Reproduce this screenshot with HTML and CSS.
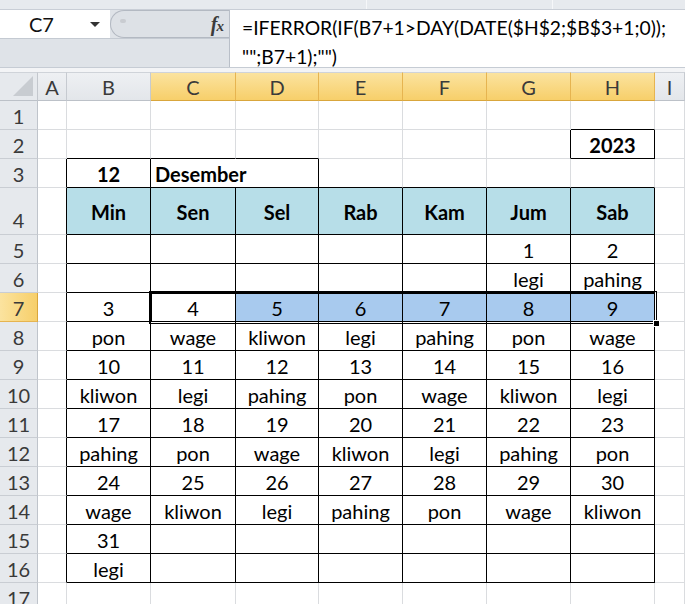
FILE: index.html
```html
<!DOCTYPE html>
<html>
<head>
<meta charset="utf-8">
<link rel="stylesheet" href="styles.css">
</head>
<body>
<div class="app">
  <div class="ribbon-edge">
    <div class="seg seg1"></div>
    <div class="seg seg2"></div>
    <div class="seg seg3"></div>
  </div>
  <div class="fbar">
    <div class="left">
      <div class="left-top">
        <div class="namebox">
          <span class="ref">C7</span>
          <span class="drop"></span>
        </div>
        <div class="pill">
          <span class="knob"></span>
          <span class="fx">f<span class="x">x</span></span>
        </div>
      </div>
    </div>
    <div class="formula">
      <div class="fline">=IFERROR(IF(B7+1&gt;DAY(DATE($H$2;$B$3+1;0));</div>
      <div class="fline">"";B7+1);"")</div>
    </div>
  </div>
  <div class="gap"></div>
  <div class="sheet">
    <!-- header row -->
    <div class="corner"><span class="tri"></span></div>
    <div class="ch">A</div>
    <div class="ch">B</div>
    <div class="ch on">C</div>
    <div class="ch on">D</div>
    <div class="ch on">E</div>
    <div class="ch on">F</div>
    <div class="ch on">G</div>
    <div class="ch on">H</div>
    <div class="ch">I</div>

    <!-- row 1 -->
    <div class="rh">1</div>
    <div class="c"></div><div class="c"></div><div class="c"></div><div class="c"></div><div class="c"></div><div class="c"></div><div class="c"></div>
    <div class="c bB"></div>
    <div class="c"></div>

    <!-- row 2 -->
    <div class="rh">2</div>
    <div class="c"></div>
    <div class="c bB"></div><div class="c bB"></div><div class="c bB"></div>
    <div class="c"></div><div class="c"></div>
    <div class="c bR"></div>
    <div class="c bR bB b">2023</div>
    <div class="c"></div>

    <!-- row 3 -->
    <div class="rh">3</div>
    <div class="c bR"></div>
    <div class="c bR bB b">12</div>
    <div class="c bR bB b l span2">Desember</div>
    <div class="c bB"></div><div class="c bB"></div><div class="c bB"></div><div class="c bB"></div>
    <div class="c"></div>

    <!-- row 4 -->
    <div class="rh tall">4</div>
    <div class="c bR"></div>
    <div class="c cal hd b">Min</div>
    <div class="c cal hd b">Sen</div>
    <div class="c cal hd b">Sel</div>
    <div class="c cal hd b">Rab</div>
    <div class="c cal hd b">Kam</div>
    <div class="c cal hd b">Jum</div>
    <div class="c cal hd b">Sab</div>
    <div class="c"></div>

    <!-- row 5 -->
    <div class="rh">5</div>
    <div class="c bR"></div>
    <div class="c cal"></div><div class="c cal"></div><div class="c cal"></div><div class="c cal"></div><div class="c cal"></div>
    <div class="c cal">1</div><div class="c cal">2</div>
    <div class="c"></div>

    <!-- row 6 -->
    <div class="rh">6</div>
    <div class="c bR"></div>
    <div class="c cal"></div><div class="c cal"></div><div class="c cal"></div><div class="c cal"></div><div class="c cal"></div>
    <div class="c cal">legi</div><div class="c cal">pahing</div>
    <div class="c"></div>

    <!-- row 7 -->
    <div class="rh on">7</div>
    <div class="c bR"></div>
    <div class="c cal">3</div>
    <div class="c cal">4</div>
    <div class="c cal sel">5</div>
    <div class="c cal sel">6</div>
    <div class="c cal sel">7</div>
    <div class="c cal sel">8</div>
    <div class="c cal sel">9</div>
    <div class="c"></div>

    <!-- row 8 -->
    <div class="rh">8</div>
    <div class="c bR"></div>
    <div class="c cal">pon</div><div class="c cal">wage</div><div class="c cal">kliwon</div><div class="c cal">legi</div><div class="c cal">pahing</div><div class="c cal">pon</div><div class="c cal">wage</div>
    <div class="c"></div>

    <!-- row 9 -->
    <div class="rh">9</div>
    <div class="c bR"></div>
    <div class="c cal">10</div><div class="c cal">11</div><div class="c cal">12</div><div class="c cal">13</div><div class="c cal">14</div><div class="c cal">15</div><div class="c cal">16</div>
    <div class="c"></div>

    <!-- row 10 -->
    <div class="rh">10</div>
    <div class="c bR"></div>
    <div class="c cal">kliwon</div><div class="c cal">legi</div><div class="c cal">pahing</div><div class="c cal">pon</div><div class="c cal">wage</div><div class="c cal">kliwon</div><div class="c cal">legi</div>
    <div class="c"></div>

    <!-- row 11 -->
    <div class="rh">11</div>
    <div class="c bR"></div>
    <div class="c cal">17</div><div class="c cal">18</div><div class="c cal">19</div><div class="c cal">20</div><div class="c cal">21</div><div class="c cal">22</div><div class="c cal">23</div>
    <div class="c"></div>

    <!-- row 12 -->
    <div class="rh">12</div>
    <div class="c bR"></div>
    <div class="c cal">pahing</div><div class="c cal">pon</div><div class="c cal">wage</div><div class="c cal">kliwon</div><div class="c cal">legi</div><div class="c cal">pahing</div><div class="c cal">pon</div>
    <div class="c"></div>

    <!-- row 13 -->
    <div class="rh">13</div>
    <div class="c bR"></div>
    <div class="c cal">24</div><div class="c cal">25</div><div class="c cal">26</div><div class="c cal">27</div><div class="c cal">28</div><div class="c cal">29</div><div class="c cal">30</div>
    <div class="c"></div>

    <!-- row 14 -->
    <div class="rh">14</div>
    <div class="c bR"></div>
    <div class="c cal">wage</div><div class="c cal">kliwon</div><div class="c cal">legi</div><div class="c cal">pahing</div><div class="c cal">pon</div><div class="c cal">wage</div><div class="c cal">kliwon</div>
    <div class="c"></div>

    <!-- row 15 -->
    <div class="rh">15</div>
    <div class="c bR"></div>
    <div class="c cal">31</div><div class="c cal"></div><div class="c cal"></div><div class="c cal"></div><div class="c cal"></div><div class="c cal"></div><div class="c cal"></div>
    <div class="c"></div>

    <!-- row 16 -->
    <div class="rh">16</div>
    <div class="c bR"></div>
    <div class="c cal">legi</div><div class="c cal"></div><div class="c cal"></div><div class="c cal"></div><div class="c cal"></div><div class="c cal"></div><div class="c cal"></div>
    <div class="c"></div>

    <!-- row 17 -->
    <div class="rh">17</div>
    <div class="c"></div><div class="c"></div><div class="c"></div><div class="c"></div><div class="c"></div><div class="c"></div><div class="c"></div><div class="c"></div><div class="c"></div>

    <div class="selection"><span class="handle"></span></div>
  </div>
</div>
</body>
</html>
```
FILE: styles.css
```css
html, body {
  margin: 0;
  padding: 0;
  background: #ffffff;
  overflow: hidden;
}
.app {
  width: 685px;
  height: 604px;
  overflow: hidden;
  font-family: "Lato", "Open Sans", sans-serif;
  color: #000;
}
.ribbon-edge {
  height: 10px;
  box-sizing: border-box;
  background: #e7eaee;
  border-bottom: 1px solid #c9ced6;
  display: flex;
}
.seg { height: 100%; box-sizing: border-box; }
.seg1 { width: 367px; border-right: 1px solid #f6f7f9; }
.seg2 { width: 186px; border-right: 1px solid #f6f7f9; }
.seg3 { flex: 1; }

.fbar {
  height: 58px;
  display: flex;
  background: #dfe3e8;
  border-bottom: 1px solid #c6ccd4;
  box-sizing: border-box;
}
.left {
  width: 230px;
  box-sizing: border-box;
  border-right: 1px solid #b9bfc8;
}
.left-top {
  display: flex;
  height: 28px;
  border-bottom: 1px solid #c4cad2;
}
.namebox {
  width: 110px;
  background: #ffffff;
  display: flex;
  align-items: center;
  box-sizing: border-box;
  padding-left: 29px;
}
.ref {
  font-size: 20px;
  color: #111;
  width: 52px;
}
.drop {
  width: 0; height: 0;
  border-left: 5px solid transparent;
  border-right: 5px solid transparent;
  border-top: 5px solid #333;
  margin-left: 9px;
}
.pill {
  flex: 1;
  background: #dde1e6;
  border: 1px solid #b3b9c2;
  border-right: none;
  border-radius: 14px 0 0 14px;
  display: flex;
  align-items: center;
  justify-content: space-between;
  padding: 0 6px 0 9px;
  box-sizing: border-box;
}
.knob {
  width: 6px;
  height: 4px;
  background: #c9ccd1;
  border-radius: 2px;
  margin-top: -6px;
}
.fx {
  font-family: "Liberation Serif", serif;
  font-style: italic;
  font-weight: bold;
  font-size: 20px;
  color: #3b3b3b;
  letter-spacing: -1px;
}
.fx .x { font-size: 15px; }

.formula {
  flex: 1;
  background: #ffffff;
  padding: 3px 0 0 12px;
  box-sizing: border-box;
  font-size: 19.3px;
  line-height: 29px;
}
.fline { white-space: nowrap; }

.gap {
  height: 4px;
  background: #f3f4f6;
}

.sheet {
  position: relative;
  display: grid;
  grid-template-columns: 38px 29px 84px 85px 83px 84px 84px 84px 84px 30px;
  grid-template-rows: 29px 29px 29px 29px 47px repeat(13, 29px);
  font-size: 20px;
}
.sheet > div {
  box-sizing: border-box;
  border-right: 1px solid #dadcdf;
  border-bottom: 1px solid #dadcdf;
  display: flex;
  align-items: center;
  justify-content: center;
  white-space: nowrap;
  padding-top: 2px;
}
.sheet > .corner {
  background: #e6e9ed;
  border-right: 1px solid #c3c7cd;
  border-bottom: 1px solid #bcc1c8;
  border-top: 1px solid #cfd3d9;
  position: relative;
}
.tri {
  position: absolute;
  right: 4px;
  bottom: 4px;
  width: 0; height: 0;
  border-left: 20px solid transparent;
  border-bottom: 20px solid #c8ccd1;
}
.sheet > .ch {
  background: linear-gradient(#eef0f3, #e3e6ea);
  border-top: 1px solid #cfd3d9;
  border-right: 1px solid #c6cad0;
  border-bottom: 1px solid #bcc1c8;
  color: #3a3a3a;
  font-size: 20px;
  padding-top: 1px;
}
.sheet > .ch.on {
  background: linear-gradient(#fbe39f, #f7cf6a);
  border-right: 1px solid #e6b450;
  border-bottom: 1px solid #d9a63c;
  color: #3a3a3a;
}
.sheet > .rh {
  background: #e6e9ed;
  border-right: 1px solid #bfc4cb;
  border-bottom: 1px solid #c9cdd3;
  color: #3a3a3a;
}
.sheet > .rh.tall { align-items: flex-end; padding-bottom: 2px; }
.sheet > .rh.on {
  background: linear-gradient(90deg, #fbe39f, #f7cf6a);
  border-right: 1px solid #d9a63c;
  border-bottom: 1px solid #e6b450;
}
.sheet > .bR { border-right-color: #000; }
.sheet > .bB { border-bottom-color: #000; }
.sheet > .cal { border-right-color: #000; border-bottom-color: #000; }
.sheet > .hd { background: #b7dee8; }
.sheet > .sel { background: #a8caee; }
.b { font-weight: bold; }
.sheet > .l { justify-content: flex-start; padding-left: 4px; }
.span2 { grid-column: span 2; }

.sheet > .selection {
  position: absolute;
  left: 149px;
  top: 219px;
  width: 508px;
  height: 33px;
  border: 3px double #000;
  padding: 0;
  pointer-events: none;
}
.handle {
  position: absolute;
  right: -6px;
  bottom: -6px;
  width: 5px;
  height: 5px;
  background: #000;
  border: 1px solid #fff;
}
```
